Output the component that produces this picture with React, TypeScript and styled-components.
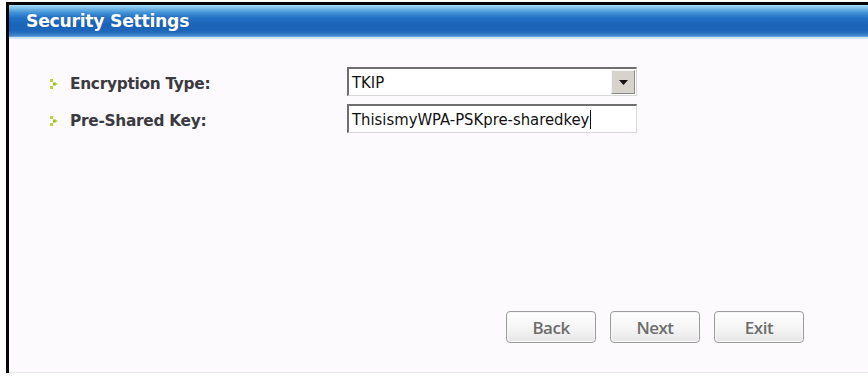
import React from "react";
import styled, { createGlobalStyle } from "styled-components";

const Global = createGlobalStyle`
  html, body { margin: 0; padding: 0; background: #ffffff; }
  body { width: 868px; height: 376px; overflow: hidden; }
`;

const Page = styled.div`
  width: 868px;
  height: 376px;
  box-sizing: border-box;
  padding: 2px 0 3px 6px;
  display: flex;
`;

const Frame = styled.div`
  flex: 1;
  display: flex;
  flex-direction: column;
  border-left: 3px solid #050505;
  border-top: 3px solid #050505;
`;

const Header = styled.div`
  height: 32px;
  display: flex;
  align-items: center;
  padding-left: 17px;
  background: linear-gradient(
    to bottom,
    #a6def5 0px,
    #7cc0ea 3px,
    #3f8fd6 8px,
    #2270c4 13px,
    #1a63b7 20px,
    #1d66b8 26px,
    #3a82cb 30px,
    #6aa6dc 32px
  );
  border-bottom: 2px solid #d6e6f5;
`;

const Title = styled.h1`
  margin: 0;
  font-family: "DejaVu Sans", Tahoma, sans-serif;
  font-weight: 700;
  font-size: 17.3px;
  letter-spacing: -0.3px;
  color: #ffffff;
  text-shadow: 0 0 1px rgba(20, 60, 120, 0.5);
`;

const Body = styled.div`
  flex: 1;
  display: flex;
  flex-direction: column;
  background: #fdfafd;
  padding: 28px 64px 29px 41px;
  border-bottom: 1px solid #ebe6eb;
`;

const Form = styled.div`
  display: grid;
  grid-template-columns: 297px 290px;
  row-gap: 8px;
  align-items: center;
`;

const Label = styled.div`
  display: flex;
  align-items: center;
  gap: 12px;
  padding-top: 5px;
  font-family: "DejaVu Sans", Tahoma, sans-serif;
  font-weight: 700;
  font-size: 15.4px;
  letter-spacing: -0.3px;
  color: #3a3a40;
`;

const Sunken = styled.div`
  height: 29px;
  box-sizing: border-box;
  display: flex;
  align-items: center;
  background: #ffffff;
  border-top: 2px solid #6f6f6f;
  border-left: 2px solid #6f6f6f;
  border-bottom: 1px solid #d8d8d8;
  border-right: 1px solid #d8d8d8;
  font-family: "DejaVu Sans Condensed", "DejaVu Sans", Tahoma, sans-serif;
  font-size: 16.5px;
  color: #111;
`;

const Value = styled.span`
  flex: 1;
  padding-left: 3px;
  display: flex;
  align-items: center;
`;

const Caret = styled.span`
  display: inline-block;
  width: 1px;
  height: 19px;
  background: #111;
  margin-left: 1px;
`;

const DropButton = styled.div`
  width: 24px;
  height: 24px;
  margin-right: 1px;
  box-sizing: border-box;
  background: #d6d3cc;
  border-top: 1px solid #f4f4f4;
  border-left: 1px solid #f4f4f4;
  border-right: 1px solid #8a8a8a;
  border-bottom: 1px solid #8a8a8a;
  display: flex;
  align-items: center;
  justify-content: center;
`;

const Buttons = styled.div`
  margin-top: auto;
  display: flex;
  justify-content: flex-end;
  gap: 14px;
`;

const Button = styled.button`
  width: 90px;
  height: 32px;
  border: 1px solid #9c9c9c;
  border-radius: 4px;
  background: linear-gradient(to bottom, #ffffff 0%, #f6f6f6 50%, #e6e6e6 100%);
  box-shadow: inset 0 0 0 1px #f8f8f8;
  font-family: "Open Sans", "DejaVu Sans", sans-serif;
  font-weight: 600;
  font-size: 17px;
  color: #6e6e6e;
  letter-spacing: -0.5px;
  padding: 0;
`;

const Bullet = () => (
  <svg width="8" height="10" viewBox="0 0 8 10">
    <rect x="0" y="0" width="3" height="3" fill="#b9d23e" />
    <rect x="3" y="3.5" width="3" height="3" fill="#98bd22" />
    <rect x="0" y="7" width="3" height="3" fill="#b9d23e" />
    <rect x="5.5" y="4" width="2" height="2" fill="#c9dd6a" />
  </svg>
);

const Triangle = () => (
  <svg width="9" height="5" viewBox="0 0 9 5">
    <path d="M0 0 H9 L4.5 5 Z" fill="#111" />
  </svg>
);

export default function App() {
  return (
    <>
      <Global />
      <Page>
        <Frame>
          <Header>
            <Title>Security Settings</Title>
          </Header>
          <Body>
            <Form>
              <Label>
                <Bullet />
                Encryption Type:
              </Label>
              <Sunken>
                <Value>TKIP</Value>
                <DropButton>
                  <Triangle />
                </DropButton>
              </Sunken>
              <Label>
                <Bullet />
                Pre-Shared Key:
              </Label>
              <Sunken>
                <Value>
                  ThisismyWPA-PSKpre-sharedkey
                  <Caret />
                </Value>
              </Sunken>
            </Form>
            <Buttons>
              <Button>Back</Button>
              <Button>Next</Button>
              <Button>Exit</Button>
            </Buttons>
          </Body>
        </Frame>
      </Page>
    </>
  );
}
